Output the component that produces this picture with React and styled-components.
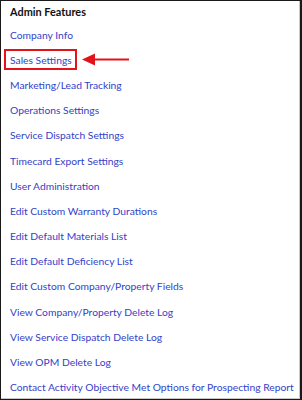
import styled, { createGlobalStyle } from "styled-components";

const GlobalStyle = createGlobalStyle`
  html, body {
    margin: 0;
    padding: 0;
    background: #fff;
  }
  body {
    font-family: Lato, "Liberation Sans", sans-serif;
  }
`;

const links = [
  "Company Info",
  "Sales Settings",
  "Marketing/Lead Tracking",
  "Operations Settings",
  "Service Dispatch Settings",
  "Timecard Export Settings",
  "User Administration",
  "Edit Custom Warranty Durations",
  "Edit Default Materials List",
  "Edit Default Deficiency List",
  "Edit Custom Company/Property Fields",
  "View Company/Property Delete Log",
  "View Service Dispatch Delete Log",
  "View OPM Delete Log",
  "Contact Activity Objective Met Options for Prospecting Report",
];

const App = () => {
  return (
    <>
      <GlobalStyle />
      <Panel>
        <Title>Admin Features</Title>
        <List>
          {links.map((label) => (
            <Row key={label}>
              {label === "Sales Settings" ? (
                <>
                  <Marked>
                    <Link>{label}</Link>
                  </Marked>
                  <Arrow width="47" height="13" viewBox="0 0 47 13">
                    <path d="M0 6.5 L13 0.5 L13 12.5 Z" fill="#e3121b" />
                    <line x1="11" y1="6.5" x2="47" y2="6.5" stroke="#e3121b" strokeWidth="2" />
                  </Arrow>
                </>
              ) : (
                <Link>{label}</Link>
              )}
            </Row>
          ))}
        </List>
      </Panel>
    </>
  );
};

const Panel = styled.div`
  box-sizing: border-box;
  width: 302px;
  height: 400px;
  border: 1px solid #1a1a1a;
  border-right-width: 2px;
  box-shadow: inset -1px -1px 0 #c8c8c8;
  padding: 0 0 0 9px;
  overflow: hidden;
`;

const Title = styled.div`
  height: 21px;
  display: flex;
  align-items: center;
  font-size: 10.9px;
  font-weight: 700;
  color: #111;
`;

const List = styled.div`
  display: flex;
  flex-direction: column;
`;

const Row = styled.div`
  height: 25.2px;
  display: flex;
  align-items: center;
`;

const Link = styled.span`
  font-size: 10.3px;
  color: #3342c8;
  white-space: nowrap;
`;

const Marked = styled.span`
  display: inline-flex;
  align-items: center;
  height: 17px;
  border: 2px solid #e3121b;
  padding: 0 3px 0 4px;
  margin-left: -6px;
`;

const Arrow = styled.svg`
  margin-left: 5px;
  display: block;
`;

export default App;
